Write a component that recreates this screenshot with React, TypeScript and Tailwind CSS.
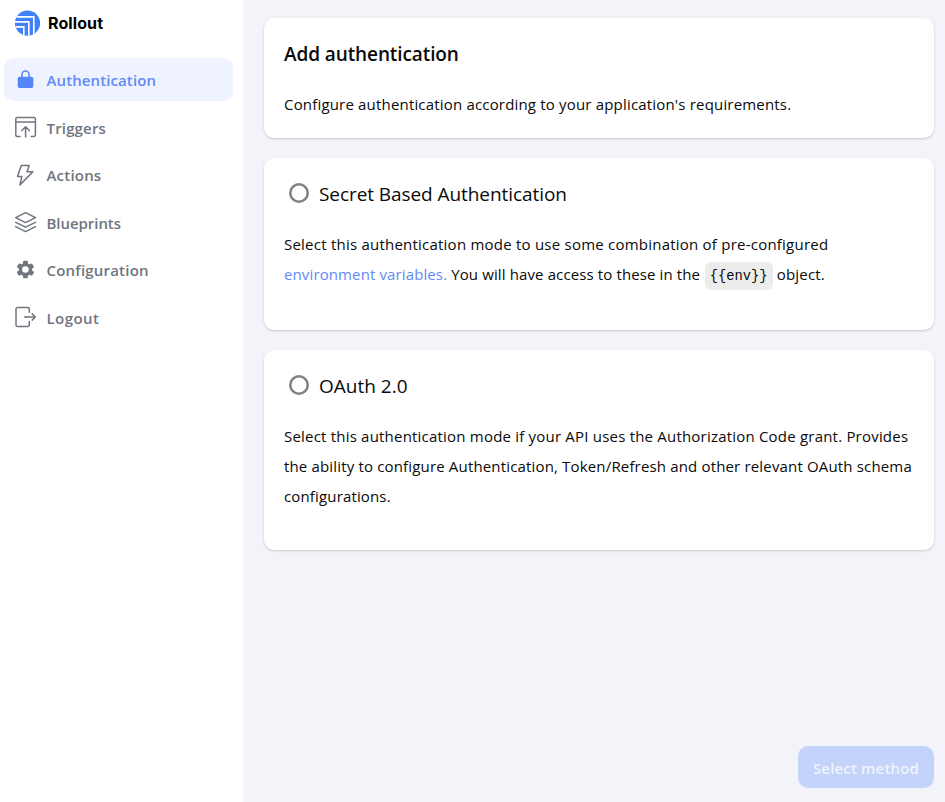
import React from "react";

const ui = "font-['Open_Sans','Noto_Sans',sans-serif]";

function Logo() {
  return (
    <svg width="27" height="27" viewBox="0 0 27 27" fill="none">
      <defs>
        <clipPath id="disc">
          <circle cx="13.5" cy="13.1" r="12.6" />
        </clipPath>
      </defs>
      <g clipPath="url(#disc)">
        <rect width="27" height="27" fill="#4080fb" />
        <path d="M0 6.900H19.800V27M0 11.900H14.800V27M0 16.900H9.800V27" stroke="#fff" strokeWidth="1.6" />
      </g>
    </svg>
  );
}

const LockIcon = () => (
  <svg width="22" height="22" viewBox="0 0 22 22" fill="none">
    <path d="M6.900 9V5.500a3.600 3.600 0 0 1 7.200 0V9" stroke="#5585f8" strokeWidth="1.5" />
    <rect x="2.700" y="7.700" width="15.600" height="11.200" rx="1.900" fill="#5585f8" />
  </svg>
);

const line = {
  fill: "none",
  stroke: "#70757e",
  strokeWidth: 1.5,
  strokeLinecap: "round" as const,
  strokeLinejoin: "round" as const,
};

const TriggerIcon = () => (
  <svg width="22" height="22" viewBox="0 -0.600 22 22" {...line}>
    <path d="M5 19.900H2.300a1.500 1.500 0 0 1-1.500-1.500V2.400A1.500 1.500 0 0 1 2.300.900h16.600a1.500 1.500 0 0 1 1.500 1.500v16a1.500 1.500 0 0 1-1.500 1.500h-2.700M.800 5.300h19.600M10.600 20.300v-9.800M6.900 14l3.700-3.800 3.700 3.800" />
  </svg>
);

const BoltIcon = () => (
  <svg width="22" height="22" viewBox="0 -0.600 22 22" {...line}>
    <path d="M6.300.900h7.900l-2.200 6.200h5.900L4.900 20.300l1.900-8.500H2.500z" />
  </svg>
);

const LayersIcon = () => (
  <svg width="22" height="22" viewBox="0 -0.700 22 22" {...line}>
    <path d="M10.600 1 20.500 6l-9.900 4.900L.700 6zM.700 10.600l9.900 4.900 9.900-4.900M.700 15l9.900 4.900 9.900-4.900" />
  </svg>
);

const GearIcon = () => (
  <svg width="22" height="22" viewBox="0.600 0.500 24 24" fill="#70757e">
    <path d="M19.14 12.94c.04-.3.06-.61.06-.94 0-.32-.02-.64-.07-.94l2.03-1.58a.49.49 0 0 0 .12-.61l-1.92-3.32a.49.49 0 0 0-.59-.22l-2.39.96a7 7 0 0 0-1.62-.94l-.36-2.54a.48.48 0 0 0-.48-.41h-3.84a.47.47 0 0 0-.47.41l-.36 2.54c-.59.24-1.13.57-1.62.94l-2.39-.96a.48.48 0 0 0-.59.22L2.74 8.87a.48.48 0 0 0 .12.61l2.03 1.58c-.05.3-.09.63-.09.94s.02.64.07.94l-2.03 1.58a.49.49 0 0 0-.12.61l1.92 3.32c.12.22.37.29.59.22l2.39-.96c.5.38 1.03.7 1.62.94l.36 2.54c.05.24.24.41.48.41h3.84c.24 0 .44-.17.47-.41l.36-2.54a7 7 0 0 0 1.62-.94l2.39.96c.22.08.47 0 .59-.22l1.92-3.32a.48.48 0 0 0-.12-.61zM12 15.6A3.6 3.6 0 1 1 12 8.4a3.6 3.6 0 0 1 0 7.2z" />
  </svg>
);

const LogoutIcon = () => (
  <svg width="22" height="22" viewBox="0 -0.700 22 22" {...line}>
    <path d="M14.300 5.500V2.400A1.600 1.600 0 0 0 12.700.800H2.600A1.600 1.600 0 0 0 1 2.400v15.800a1.600 1.600 0 0 0 1.600 1.600h10.100a1.600 1.600 0 0 0 1.600-1.600V14.800M9.500 10.300h10.800M17.200 7.200l3.100 3.100-3.100 3.100" />
  </svg>
);

const items = [
  { label: "Authentication", icon: <LockIcon />, track: "tracking-[0.1px]", active: true },
  { label: "Triggers", icon: <TriggerIcon />, track: "tracking-[0.17px]" },
  { label: "Actions", icon: <BoltIcon />, track: "tracking-[0.2px]" },
  { label: "Blueprints", icon: <LayersIcon />, track: "tracking-[-0.05px]" },
  { label: "Configuration", icon: <GearIcon />, track: "tracking-[0.2px]" },
  { label: "Logout", icon: <LogoutIcon />, track: "tracking-[0.42px]" },
];

function Card({ className, children }: { className: string; children: React.ReactNode }) {
  return (
    <section
      className={`rounded-[10px] bg-white px-5 shadow-[0_1px_3px_rgba(0,0,0,0.13),0_1px_2px_rgba(0,0,0,0.06)] ${className}`}
    >
      {children}
    </section>
  );
}

function Option({ title, track }: { title: string; track: string }) {
  return (
    <label className="flex h-[30px] items-center pl-[5px]">
      <span className="mb-[2px] size-5 shrink-0 rounded-full shadow-[inset_0_0_0_2.5px_#808080]" />
      <span className={`ml-[10px] text-[19px] whitespace-nowrap ${track}`}>{title}</span>
    </label>
  );
}

export default function App() {
  return (
    <div className={`flex h-[802px] w-[945px] overflow-hidden bg-[#f3f4f9] text-[15px] text-[#0a0a0a] ${ui}`}>
      <aside className="w-[243px] shrink-0 bg-white pr-[10px] pl-1">
        <div className="flex h-[58px] items-start pt-[10px] pl-[10px]">
          <Logo />
          <span className="ml-[7px] font-[Inter,sans-serif] text-[16px] leading-[26px] font-bold tracking-[0.1px] text-black">
            Rollout
          </span>
        </div>
        <nav className="flex flex-col gap-[4.5px]">
          {items.map((it) => (
            <a
              key={it.label}
              className={`flex h-[43px] items-center gap-[9.5px] rounded-[10px] pl-[11px] font-semibold ${
                it.active ? "bg-[#eef3ff] text-[#6489f5]" : "text-[#70757e]"
              }`}
            >
              {it.icon}
              <span className={`pt-[2px] ${it.track}`}>{it.label}</span>
            </a>
          ))}
        </nav>
      </aside>
      <main className="flex flex-1 flex-col pt-[18px] pr-[11px] pb-[14px] pl-[21px]">
        <Card className="h-[120px] pt-[21px]">
          <h1 className="text-[19px] leading-[30px] font-semibold tracking-[-0.1px]">Add authentication</h1>
          <p className="mt-5 leading-[30px] tracking-[0.18px] whitespace-nowrap">
            Configure authentication according to your application's requirements.
          </p>
        </Card>
        <Card className="mt-5 h-[172px] pt-[21px]">
          <Option title="Secret Based Authentication" track="tracking-[-0.07px]" />
          <p className="mt-5 leading-[30px] whitespace-nowrap">
            <span className="block tracking-[0.228px]">
              Select this authentication mode to use some combination of pre-configured
            </span>
            <span className="block tracking-[0.12px]">
              <a className="text-[#6489f5]">environment variables.</a> You will have access to these in the{" "}
              <code className="ml-[0.5px] rounded-md bg-[#ececec] px-[5px] pt-[7px] pb-[6px] font-['Liberation_Mono',monospace] text-[13.8px] tracking-normal">
                {"{{env}}"}
              </code>{" "}
              <span className="tracking-[0.2px]">object.</span>
            </span>
          </p>
        </Card>
        <Card className="mt-5 h-[200px] pt-[21px]">
          <Option title="OAuth 2.0" track="" />
          <p className="mt-5 leading-[30px] whitespace-nowrap">
            <span className="block tracking-[0.205px]">
              Select this authentication mode if your API uses the Authorization Code grant. Provides
            </span>
            <span className="block tracking-[0.163px]">
              the ability to configure Authentication, Token/Refresh and other relevant OAuth schema
            </span>
            <span className="block tracking-[0.15px]">configurations.</span>
          </p>
        </Card>
        <button className="mt-auto h-[42px] w-[136px] self-end rounded-[10px] bg-[#c3d3f9] pt-[2px] font-semibold tracking-[0.17px] whitespace-nowrap text-[#f0f4fe]">
          Select method
        </button>
      </main>
    </div>
  );
}
